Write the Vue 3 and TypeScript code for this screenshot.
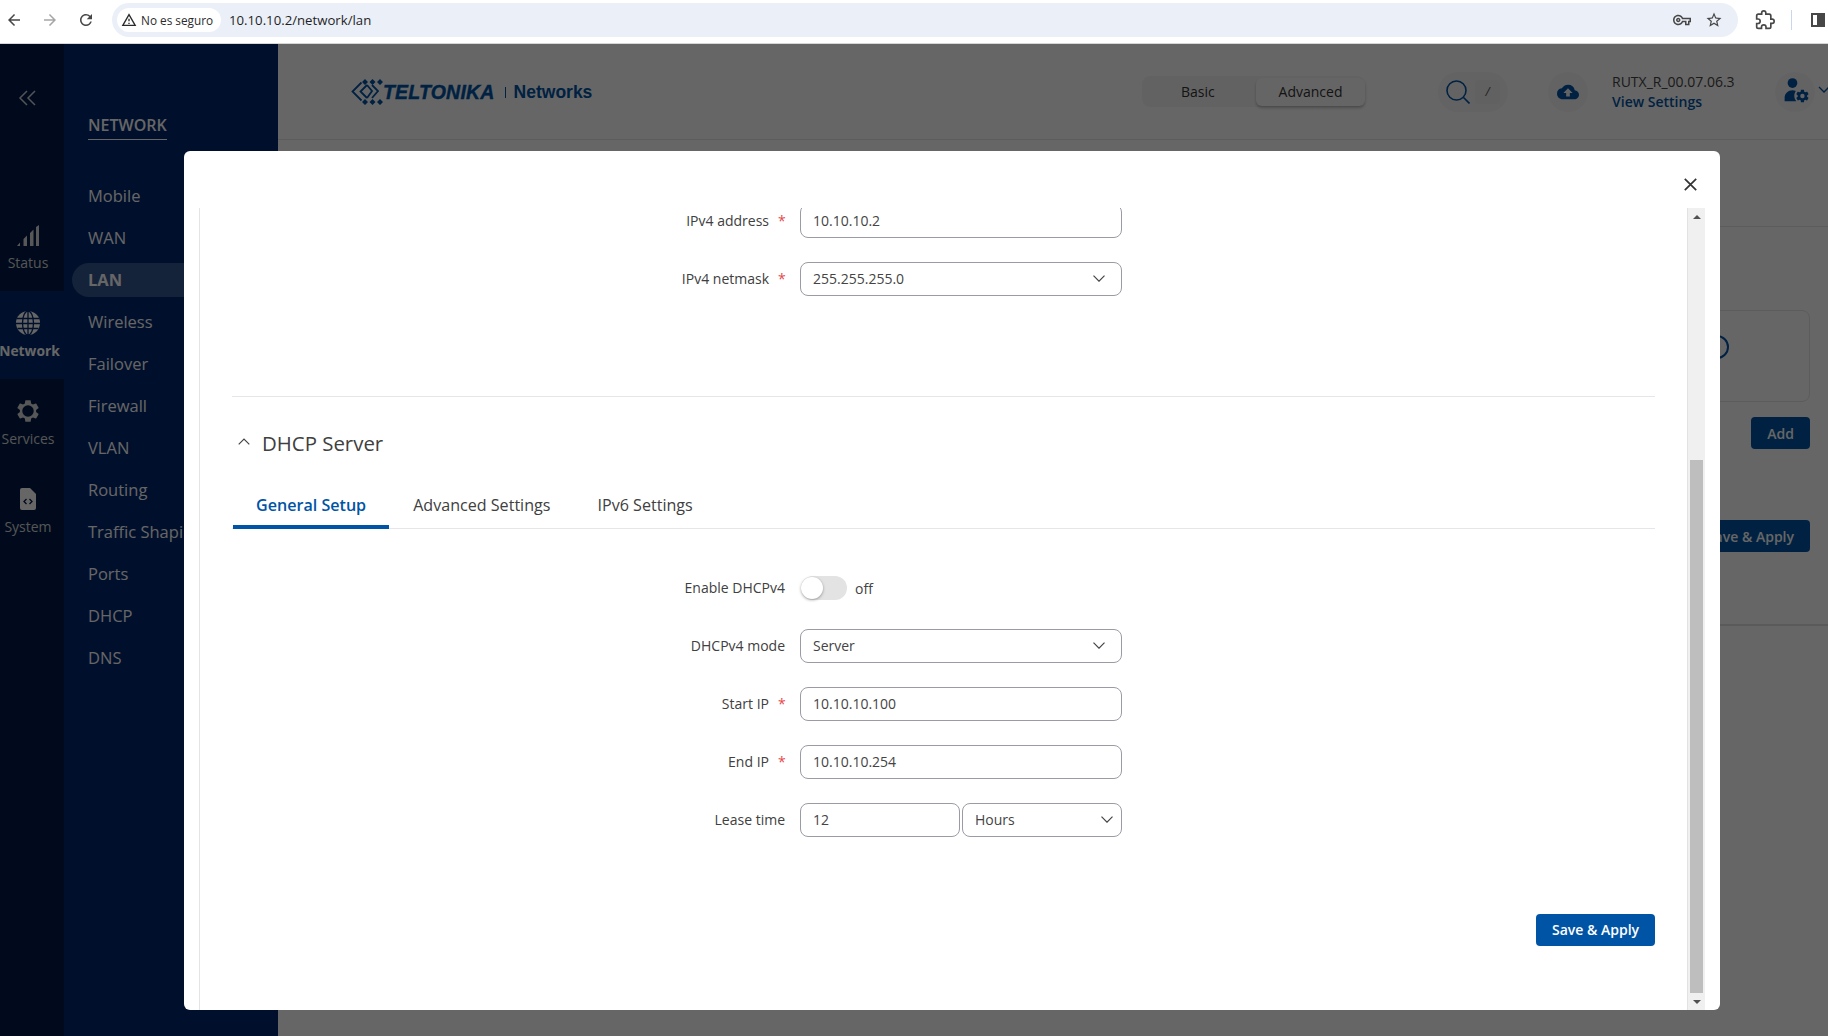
<script setup lang="ts">
const navItems: string[] = ['Mobile', 'WAN', 'LAN', 'Wireless', 'Failover', 'Firewall', 'VLAN', 'Routing', 'Traffic Shaping', 'Ports', 'DHCP', 'DNS']
const tabs: string[] = ['General Setup', 'Advanced Settings', 'IPv6 Settings']
const gearHole = 'M19.43 12.98c.04-.32.07-.64.07-.98s-.03-.66-.07-.98l2.11-1.65c.19-.15.24-.42.12-.64l-2-3.46c-.12-.22-.39-.3-.61-.22l-2.49 1c-.52-.4-1.08-.73-1.69-.98l-.38-2.65A.488.488 0 0 0 14 2h-4c-.25 0-.46.18-.49.42l-.38 2.65c-.61.25-1.17.59-1.69.98l-2.49-1c-.23-.09-.49 0-.61.22l-2 3.46c-.13.22-.07.49.12.64l2.11 1.65c-.04.32-.07.65-.07.98s.03.66.07.98l-2.11 1.65c-.19.15-.24.42-.12.64l2 3.46c.12.22.39.3.61.22l2.49-1c.52.4 1.08.73 1.69.98l.38 2.65c.03.24.24.42.49.42h4c.25 0 .46-.18.49-.42l.38-2.65c.61-.25 1.17-.59 1.69-.98l2.49 1c.23.09.49 0 .61-.22l2-3.46c.12-.22.07-.49-.12-.64l-2.11-1.65z'
</script>

<template>
  <div class="page">
    <header class="chrome">
      <svg class="c-ic back" viewBox="0 0 24 24"><path d="M20 11H7.83l5.59-5.59L12 4l-8 8 8 8 1.41-1.41L7.83 13H20v-2z" /></svg>
      <svg class="c-ic fwd" viewBox="0 0 24 24"><path d="M4 11h12.17l-5.59-5.59L12 4l8 8-8 8-1.41-1.41L16.17 13H4v-2z" /></svg>
      <svg class="c-ic reload" viewBox="0 0 24 24"><path d="M17.65 6.35A7.958 7.958 0 0 0 12 4c-4.42 0-7.99 3.58-7.99 8s3.57 8 7.99 8c3.73 0 6.84-2.55 7.73-6h-2.08A5.99 5.99 0 0 1 12 18c-3.31 0-6-2.69-6-6s2.69-6 6-6c1.66 0 3.14.69 4.22 1.78L13 11h7V4l-2.35 2.35z" /></svg>
      <div class="omnibox">
        <div class="chip">
          <svg class="warn" viewBox="0 0 24 24"><path d="M12 5.99L19.53 19H4.47L12 5.99M12 2L1 21h22L12 2zm1 14h-2v2h2v-2zm0-6h-2v4h2v-4z" /></svg>
          <span>No es seguro</span>
        </div>
        <span class="url">10.10.10.2/network/lan</span>
        <svg class="o-ic key" viewBox="0 0 24 24"><path d="M22 19h-6v-4h-2.68c-1.14 2.42-3.6 4-6.32 4-3.86 0-7-3.14-7-7s3.14-7 7-7c2.72 0 5.17 1.58 6.32 4H24v6h-2v4zm-4-2h2v-4h2v-2H11.94l-.23-.67C11.01 8.34 9.11 7 7 7c-2.76 0-5 2.24-5 5s2.24 5 5 5c2.11 0 4.01-1.34 4.71-3.33l.23-.67H18v4zM7 15c-1.65 0-3-1.35-3-3s1.35-3 3-3 3 1.35 3 3-1.35 3-3 3zm0-4c-.55 0-1 .45-1 1s.45 1 1 1 1-.45 1-1-.45-1-1-1z" /></svg>
        <svg class="o-ic star" viewBox="0 0 24 24"><path d="M22 9.24l-7.19-.62L12 2 9.19 8.63 2 9.24l5.46 4.73L5.82 21 12 17.27 18.18 21l-1.63-7.03L22 9.24zM12 15.4l-3.76 2.27 1-4.28-3.32-2.88 4.38-.38L12 6.1l1.71 4.04 4.38.38-3.32 2.88 1 4.28L12 15.4z" /></svg>
      </div>
      <svg class="ext" viewBox="0 0 24 24"><path d="M20.5 11H19V7c0-1.1-.9-2-2-2h-4V3.5C13 2.12 11.88 1 10.5 1S8 2.12 8 3.5V5H4c-1.1 0-1.99.9-1.99 2v3.8H3.5c1.49 0 2.7 1.21 2.7 2.7s-1.21 2.7-2.7 2.7H2V20c0 1.1.9 2 2 2h3.8v-1.5c0-1.49 1.21-2.7 2.7-2.7 1.49 0 2.7 1.21 2.7 2.7V22H17c1.1 0 2-.9 2-2v-4h1.5c1.38 0 2.5-1.12 2.5-2.5S21.88 11 20.5 11z" /></svg>
      <span class="sep"></span>
      <span class="sidepanel"></span>
    </header>

    <div class="app">
      <aside class="rail">
        <svg class="collapse" viewBox="0 0 20 16"><path d="M9 1 2 8l7 7M17 1l-7 7 7 7" /></svg>
        <div class="rail-item">
          <svg class="rail-ic signal" viewBox="0 0 22 21"><path d="M0 21 3 17.500V21zM6.500 21V14L10 10.500V21zM13 21V8L16.500 4.500V21zM19 21V2L22 0V21z" /></svg>
          <span>Status</span>
        </div>
        <div class="rail-item active">
          <svg class="rail-ic globe" viewBox="0 0 24 24">
            <circle cx="12" cy="12" r="12" fill="#fff" />
            <g fill="none" stroke="#00266e" stroke-width="1.300">
              <ellipse cx="12" cy="12" rx="5.500" ry="12" />
              <path d="M12 0v24M1 7.500h22M0 12.500h24M1.500 17.500h21" />
            </g>
          </svg>
          <span>Network</span>
        </div>
        <div class="rail-item">
          <svg class="rail-ic gear" viewBox="0 0 24 24"><path :d="gearHole + 'M12 17.300a5.300 5.300 0 1 1 0-10.600 5.300 5.300 0 0 1 0 10.600z'" fill-rule="evenodd" /></svg>
          <span>Services</span>
        </div>
        <div class="rail-item">
          <svg class="rail-ic doc" viewBox="0 0 16 22">
            <path d="M2 0h8l6 6v14a2 2 0 0 1-2 2H2a2 2 0 0 1-2-2V2a2 2 0 0 1 2-2z" fill="#fff" />
            <path d="M6.500 11 4 13.500 6.500 16M9.500 11 12 13.500 9.500 16" fill="none" stroke="#001a46" stroke-width="1.300" />
          </svg>
          <span>System</span>
        </div>
      </aside>

      <nav class="panel">
        <div class="panel-title"><span>NETWORK</span></div>
        <ul class="nav">
          <li v-for="item in navItems" :key="item" :class="{ current: item === 'LAN' }">{{ item }}</li>
        </ul>
      </nav>

      <main class="main">
        <div class="topbar">
          <div class="logo">
            <svg class="logo-mark" viewBox="0 0 34 28">
              <g fill="#0054a6">
                <path d="M14 1 17 4 14 7 11 4zM21.500 1 24.500 4 21.500 7 18.500 4zM29 1 32 4 29 7 26 4zM14 21 17 24 14 27 11 24zM21.500 21 24.500 24 21.500 27 18.500 24zM29 21 32 24 29 27 26 24z" />
              </g>
              <g fill="none" stroke="#0054a6" stroke-width="1.800">
                <path d="M10.500 4.500 1.500 13.500 10.500 22.500M16 7 9.500 13.500 16 20M21 7 27 13 21 20M16 7 21 13 16 20" />
              </g>
            </svg>
            <span class="logo-word">TELTONIKA</span>
            <span class="logo-bar"></span>
            <span class="logo-sub">Networks</span>
          </div>
          <div class="mode">
            <span class="mode-item">Basic</span>
            <span class="mode-item on">Advanced</span>
          </div>
          <div class="search">
            <svg class="search-ic" viewBox="0 0 24 24"><circle cx="10.500" cy="10.500" r="9.500" /><path d="m17.500 17.500 6 6" /></svg>
            <span class="slash">/</span>
          </div>
          <div class="round cloud">
            <svg viewBox="0 0 24 24"><path d="M19.350 10.040A7.490 7.490 0 0 0 12 4C9.110 4 6.600 5.640 5.350 8.040A5.994 5.994 0 0 0 0 14c0 3.310 2.690 6 6 6h13c2.760 0 5-2.240 5-5 0-2.640-2.050-4.780-4.650-4.960zM14 13v4h-4v-4H7l5-5 5 5h-3z" /></svg>
          </div>
          <div class="version">
            <span class="ver">RUTX_R_00.07.06.3</span>
            <span class="view">View Settings</span>
          </div>
          <div class="round user">
            <svg viewBox="0 0 24 24">
              <circle cx="9.500" cy="5" r="4" />
              <path d="M3 20v-3c0-3 3-6 6.500-6 1 0 2 .2 2.800.6-.8 1-1.300 2.400-1.300 3.900 0 1.700.6 3.300 1.700 4.500z" />
              <g transform="translate(11.500 9.500) scale(.52)"><path :d="gearHole + 'M12 15.500a3.500 3.500 0 1 1 0-7 3.500 3.500 0 0 1 0 7z'" fill-rule="evenodd" /></g>
            </svg>
          </div>
          <svg class="user-chev" viewBox="0 0 12 8"><path d="m1 1 5 5 5-5" /></svg>
        </div>
        <div class="subhead"></div>
        <section class="section">
          <div class="card"><span class="ring"></span></div>
          <button class="bg-btn add">Add</button>
          <button class="bg-btn save">Save &amp; Apply</button>
        </section>
      </main>
    </div>

    <div class="overlay">
      <div class="modal">
        <svg class="close" viewBox="0 0 13 13"><path d="m.8.8 11.400 11.400M12.200.8.8 12.200" /></svg>
        <div class="scroller">
          <div class="content">
            <div class="row">
              <div class="lbl"><span>IPv4 address</span><span class="req">*</span></div>
              <div class="field">10.10.10.2</div>
            </div>
            <div class="row">
              <div class="lbl"><span>IPv4 netmask</span><span class="req">*</span></div>
              <div class="field select">
                <span>255.255.255.0</span>
                <svg class="chev" viewBox="0 0 12 7"><path d="m.5.7 5.500 5.500L11.500.7" /></svg>
              </div>
            </div>

            <div class="divider"></div>

            <div class="section-head">
              <svg class="up" viewBox="0 0 12 7"><path d="M.7 6.300 6 1l5.300 5.300" /></svg>
              <h2>DHCP Server</h2>
            </div>

            <div class="tabs">
              <div v-for="(tab, i) in tabs" :key="tab" class="tab" :class="{ active: i === 0 }">{{ tab }}</div>
            </div>

            <div class="row first">
              <div class="lbl"><span>Enable DHCPv4</span></div>
              <div class="switch-wrap">
                <span class="switch"><span class="knob"></span></span>
                <span>off</span>
              </div>
            </div>
            <div class="row">
              <div class="lbl"><span>DHCPv4 mode</span></div>
              <div class="field select">
                <span>Server</span>
                <svg class="chev" viewBox="0 0 12 7"><path d="m.5.7 5.500 5.500L11.500.7" /></svg>
              </div>
            </div>
            <div class="row">
              <div class="lbl"><span>Start IP</span><span class="req">*</span></div>
              <div class="field">10.10.10.100</div>
            </div>
            <div class="row">
              <div class="lbl"><span>End IP</span><span class="req">*</span></div>
              <div class="field">10.10.10.254</div>
            </div>
            <div class="row">
              <div class="lbl"><span>Lease time</span></div>
              <div class="pair">
                <div class="field half">12</div>
                <div class="field half select tight">
                  <span>Hours</span>
                  <svg class="chev" viewBox="0 0 12 7"><path d="m.5.7 5.500 5.500L11.500.7" /></svg>
                </div>
              </div>
            </div>

            <div class="actions">
              <button class="primary">Save &amp; Apply</button>
            </div>
          </div>

          <div class="scrollbar">
            <div class="sb-top"><span class="tri up-tri"></span></div>
            <div class="sb-thumb"></div>
            <div class="sb-bottom"><span class="tri down-tri"></span></div>
          </div>
        </div>
      </div>
    </div>
  </div>
</template>

<style>
html,
body {
  margin: 0;
  background: #fff;
  overflow: hidden;
}
</style>

<style scoped>
.page {
  position: relative;
  width: 1828px;
  height: 1036px;
  overflow: hidden;
  font-family: "Open Sans", "Noto Sans", sans-serif;
  color: #404040;
}

/* browser chrome */
.chrome {
  display: flex;
  align-items: center;
  height: 44px;
  box-sizing: border-box;
  padding: 0 0 3px 0;
  background: #fff;
  border-bottom: 1px solid #d6d6d6;
}
.c-ic {
  width: 18px;
  height: 18px;
  flex: none;
  fill: #474747;
}
.back { margin-left: 5px; }
.fwd { margin-left: 18px; fill: #a6a6a6; }
.reload { margin-left: 18px; }
.omnibox {
  display: flex;
  align-items: center;
  width: 1626px;
  height: 34px;
  margin-left: 17px;
  padding-left: 5px;
  box-sizing: border-box;
  border-radius: 17px;
  background: #ebeff8;
}
.chip {
  display: flex;
  align-items: center;
  gap: 4px;
  width: 104px;
  height: 24px;
  box-sizing: border-box;
  padding-left: 4px;
  border-radius: 12px;
  background: #fff;
  font-size: 11.800px;
  color: #2b2b2b;
}
.warn { width: 16px; height: 16px; fill: #2b2b2b; }
.url {
  margin-left: 8px;
  font-size: 13.200px;
  color: #1f1f1f;
}
.o-ic { width: 18px; height: 18px; fill: #474747; flex: none; }
.key { margin-left: auto; }
.star { margin-left: 14px; margin-right: 15px; }
.ext {
  width: 20px;
  height: 20px;
  margin-left: 17px;
  flex: none;
  fill: none;
  stroke: #474747;
  stroke-width: 2;
}
.sep {
  width: 1px;
  height: 20px;
  margin-left: 16px;
  background: #c9d6ee;
}
.sidepanel {
  width: 14px;
  height: 14px;
  margin-left: 19px;
  box-sizing: border-box;
  border: 2px solid #474747;
  background: linear-gradient(90deg, #fff 0 45%, #474747 45% 100%);
  flex: none;
}

/* app behind the dialog */
.app {
  display: flex;
  height: 992px;
}
.rail {
  display: flex;
  flex-direction: column;
  width: 64px;
  flex: none;
  background: #001a46;
}
.collapse {
  width: 20px;
  height: 16px;
  margin: 46px 0 97px 18px;
  fill: none;
  stroke: #fff;
  stroke-width: 1.500;
  opacity: .8;
}
.rail-item {
  display: flex;
  flex-direction: column;
  align-items: center;
  box-sizing: border-box;
  height: 88px;
  padding: 20px 8px 0 0;
  font-size: 14px;
  line-height: 18px;
  color: #d4d4d4;
  white-space: nowrap;
}
.rail-item.active {
  padding-right: 5px;
  background: #00266e;
  color: #fff;
  font-size: 13.800px;
  font-weight: 700;
}
.rail-ic {
  width: 24px;
  height: 24px;
  margin-bottom: 7px;
  flex: none;
  fill: #d9d9d9;
}
.globe { margin-right: 3px; }
.signal { width: 22px; height: 21px; margin: 2px 0 8px; }
.gear { width: 26px; height: 26px; margin: -1px 0 6px; }
.doc { width: 16px; height: 22px; margin: 1px 0 8px; }
.panel {
  width: 214px;
  flex: none;
  background: #00266e;
  color: #fff;
}
.panel-title {
  padding: 69px 0 0 24px;
  height: 25px;
  font-size: 16px;
  font-weight: 600;
  line-height: 24px;
}
.panel-title span {
  display: inline-block;
  padding-bottom: 2px;
  border-bottom: 1px solid #fff;
}
.nav {
  list-style: none;
  margin: 41px 0 0 8px;
  padding: 0;
  font-size: 16.500px;
}
.nav li {
  height: 34px;
  margin-bottom: 8px;
  padding-left: 16px;
  line-height: 34px;
  white-space: nowrap;
}
.nav li.current {
  background: #325591;
  border-radius: 17px 0 0 17px;
  font-weight: 700;
}
.main {
  flex: 1;
  min-width: 0;
  display: flex;
  flex-direction: column;
  background: #fff;
}
.topbar {
  display: flex;
  align-items: center;
  height: 96px;
  box-sizing: border-box;
  padding: 0 0 0 73px;
  border-bottom: 1px solid #e6e6e6;
  overflow: hidden;
}
.logo {
  display: flex;
  align-items: center;
  width: 241px;
  flex: none;
  color: #0054a6;
}
.logo-mark { width: 34px; height: 28px; flex: none; }
.logo-word {
  margin: 2px 0 0 -2px;
  flex: none;
  font-family: "Liberation Sans", sans-serif;
  font-size: 19.500px;
  font-style: italic;
  font-weight: 700;
  letter-spacing: .2px;
  -webkit-text-stroke: .4px #0054a6;
}
.logo-bar {
  width: 1px;
  height: 11px;
  margin: 2px 0 0 10px;
  flex: none;
  background: #0054a6;
}
.logo-sub {
  margin: 2px 0 0 8px;
  flex: none;
  font-family: "Liberation Sans", sans-serif;
  font-size: 17.500px;
  font-weight: 700;
}
.mode {
  display: flex;
  align-items: center;
  justify-content: space-between;
  width: 223px;
  height: 31px;
  margin-left: 550px;
  flex: none;
  box-sizing: border-box;
  padding-left: 39px;
  border-radius: 8px;
  background: #f6f6f6;
  font-size: 14px;
  color: #333;
}
.mode-item.on {
  width: 109px;
  height: 28px;
  line-height: 28px;
  text-align: center;
  border-radius: 6px;
  background: #fdfdfd;
  box-shadow: 0 2px 3px rgba(0, 0, 0, .25);
}
.search {
  display: flex;
  align-items: center;
  width: 70px;
  height: 40px;
  margin-left: 73px;
  flex: none;
  box-sizing: border-box;
  padding-left: 8px;
  border-radius: 20px;
  background: #f8f8f8;
}
.search-ic {
  width: 24px;
  height: 24px;
  fill: none;
  stroke: #0054a6;
  stroke-width: 1.600;
  flex: none;
}
.slash {
  width: 25px;
  height: 24px;
  margin-left: 5px;
  border-radius: 4px;
  background: #f2f2f2;
  text-align: center;
  font-size: 12px;
  font-style: italic;
  line-height: 24px;
  color: #555;
}
.round {
  display: flex;
  align-items: center;
  justify-content: center;
  width: 40px;
  height: 40px;
  flex: none;
  border-radius: 50%;
  background: #f8f8f8;
}
.round svg { fill: #0054a6; }
.cloud { margin-left: 40px; }
.cloud svg { width: 22px; height: 22px; }
.user svg { width: 29px; height: 29px; }
.version {
  display: flex;
  flex-direction: column;
  width: 163px;
  margin-left: 24px;
  flex: none;
  font-size: 14px;
  line-height: 20px;
}
.ver { color: #444; }
.view { color: #0054a6; font-weight: 600; }
.user-chev {
  width: 12px;
  height: 8px;
  margin: -4px 0 0 3px;
  flex: none;
  fill: none;
  stroke: #0054a6;
  stroke-width: 1.300;
}
.subhead {
  height: 86px;
  flex: none;
  border-bottom: 1px solid #e6e6e6;
}
.section {
  display: flex;
  flex-direction: column;
  align-items: flex-end;
  height: 399px;
  flex: none;
  box-sizing: border-box;
  padding: 83px 18px 0 0;
  border-bottom: 2px solid #e0e0e0;
}
.card {
  display: flex;
  justify-content: flex-end;
  width: 400px;
  height: 92px;
  box-sizing: border-box;
  padding: 24px 80px 0 0;
  border: 1px solid #e6e6e6;
  border-radius: 8px;
}
.ring {
  width: 24px;
  height: 24px;
  box-sizing: border-box;
  border: 2px solid #0054a6;
  border-radius: 50%;
}
.bg-btn {
  height: 32px;
  box-sizing: border-box;
  padding: 0 16px;
  border: 0;
  border-radius: 4px;
  background: #0054a6;
  color: #fff;
  font-family: inherit;
  font-size: 14px;
  font-weight: 600;
}
.add { width: 59px; padding: 0; margin-top: 15px; }
.save { margin-top: 71px; }

/* dialog */
.overlay {
  position: absolute;
  top: 44px;
  left: 0;
  right: 0;
  bottom: 0;
  background: rgba(0, 0, 0, .6);
}
.modal {
  position: relative;
  width: 1536px;
  height: 859px;
  margin: 107px 0 0 184px;
  box-sizing: border-box;
  padding: 57px 15px 0;
  border-radius: 6px;
  background: #fff;
}
.close {
  position: absolute;
  top: 27px;
  right: 23px;
  width: 13px;
  height: 13px;
  fill: none;
  stroke: #333;
  stroke-width: 1.700;
}
.scroller {
  display: flex;
  height: 802px;
  overflow: hidden;
  border-left: 1px solid #e4e4e4;
}
.content {
  flex: 1;
  min-width: 0;
  padding: 0 32px;
  margin-top: -4px;
}
.row {
  display: flex;
  align-items: center;
  height: 34px;
  margin-bottom: 24px;
}
.row.first { margin-top: 42px; }
.lbl {
  display: flex;
  justify-content: flex-end;
  gap: 9px;
  width: 553px;
  margin-right: 15px;
  padding-bottom: 1px;
  flex: none;
  font-size: 14px;
  color: #404040;
}
.req { width: 7px; color: #e5484d; }
.field {
  display: flex;
  align-items: center;
  justify-content: space-between;
  width: 322px;
  height: 34px;
  flex: none;
  box-sizing: border-box;
  padding: 0 16px 1px 12px;
  border: 1px solid #9b9ba5;
  border-radius: 8px;
  font-size: 14px;
  color: #444;
}
.chev {
  width: 12px;
  height: 7px;
  fill: none;
  stroke: #444;
  stroke-width: 1.200;
  flex: none;
}
.pair {
  display: flex;
  gap: 2px;
  width: 322px;
}
.half { width: 160px; }
.tight { padding-right: 8px; }
.divider {
  height: 1px;
  margin-top: 100px;
  background: #e6e6ea;
}
.section-head {
  display: flex;
  align-items: center;
  height: 30px;
  margin-top: 31px;
}
.up {
  width: 12px;
  height: 7px;
  margin: -4px 12px 0 6px;
  flex: none;
  fill: none;
  stroke: #444;
  stroke-width: 1.200;
}
h2 {
  margin: 0;
  font-size: 20.400px;
  font-weight: 400;
  line-height: 30px;
  color: #404040;
}
.tabs {
  display: flex;
  gap: 1px;
  height: 48px;
  margin-top: 23px;
  padding-left: 1px;
  box-sizing: border-box;
  border-bottom: 1px solid #e6e6ea;
}
.tab {
  height: 48px;
  box-sizing: border-box;
  padding: 4px 23px 0;
  font-size: 16.100px;
  line-height: 40px;
  color: #404040;
  white-space: nowrap;
}
.tab.active {
  border-bottom: 4px solid #0054a6;
  color: #0054a6;
  font-weight: 600;
}
.switch-wrap {
  display: flex;
  align-items: center;
  gap: 8px;
  margin-left: 1px;
  font-size: 14px;
  color: #444;
}
.switch {
  display: block;
  width: 46px;
  height: 24px;
  border-radius: 12px;
  background: #e3e3e3;
}
.knob {
  display: block;
  width: 22px;
  height: 22px;
  margin-top: 1px;
  border-radius: 50%;
  background: #fff;
  box-shadow: 0 1px 3px rgba(0, 0, 0, .35);
}
.actions {
  display: flex;
  justify-content: flex-end;
  margin-top: 77px;
}
.primary {
  width: 119px;
  height: 32px;
  padding: 0 0 2px;
  border: 0;
  border-radius: 4px;
  background: #0054a6;
  color: #fff;
  font-family: inherit;
  font-size: 14px;
  font-weight: 600;
}
.scrollbar {
  display: flex;
  flex-direction: column;
  align-items: center;
  width: 18px;
  flex: none;
  box-sizing: border-box;
  border-left: 1px solid #e2e2e2;
  background: #f0f0f0;
}
.sb-top {
  display: flex;
  justify-content: center;
  height: 252px;
  padding-top: 7px;
  box-sizing: border-box;
  flex: none;
}
.sb-thumb {
  width: 13px;
  flex: 1;
  background: #bebebe;
}
.sb-bottom {
  display: flex;
  justify-content: center;
  height: 17px;
  padding-top: 7px;
  box-sizing: border-box;
  flex: none;
}
.tri {
  width: 0;
  height: 0;
  border-left: 4px solid transparent;
  border-right: 4px solid transparent;
}
.up-tri { border-bottom: 4px solid #505050; }
.down-tri { border-top: 4px solid #505050; }
</style>
